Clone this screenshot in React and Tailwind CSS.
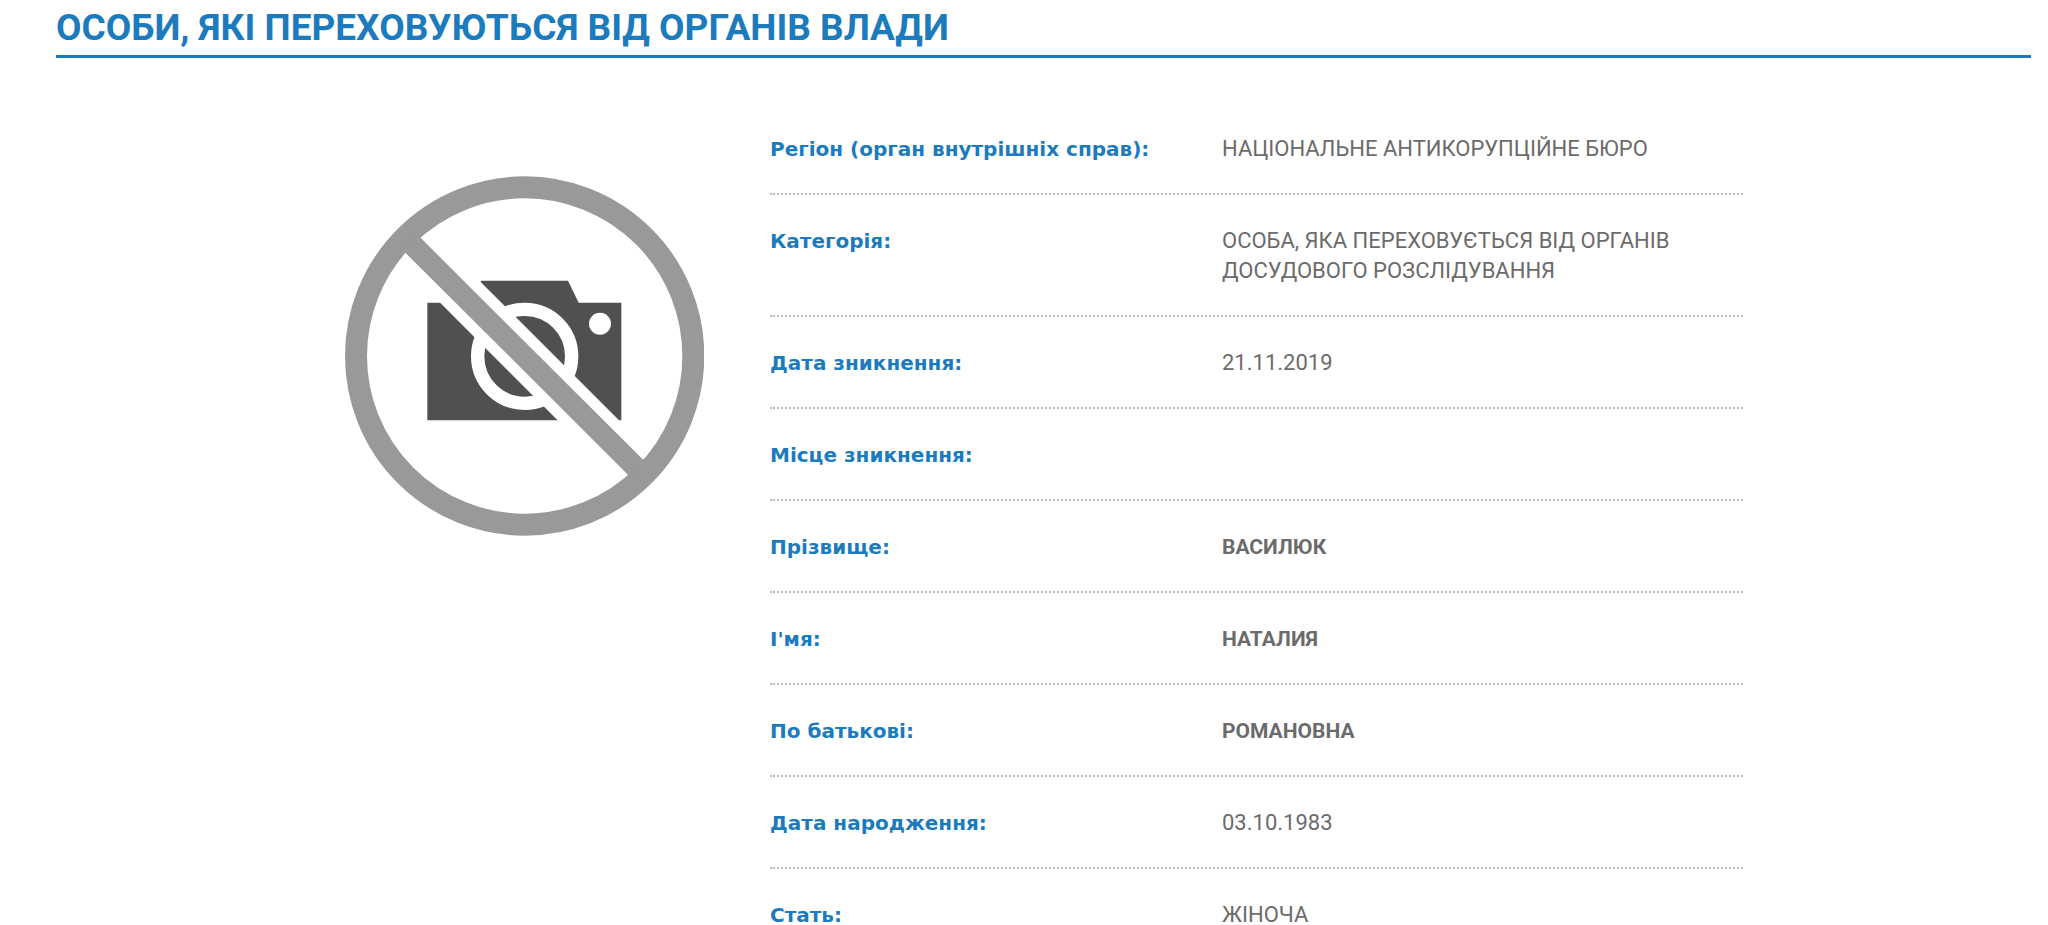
const details = [
  { label: "Регіон (орган внутрішніх справ):", value: "НАЦІОНАЛЬНЕ АНТИКОРУПЦІЙНЕ БЮРО" },
  { label: "Категорія:", value: "ОСОБА, ЯКА ПЕРЕХОВУЄТЬСЯ ВІД ОРГАНІВ ДОСУДОВОГО РОЗСЛІДУВАННЯ" },
  { label: "Дата зникнення:", value: "21.11.2019" },
  { label: "Місце зникнення:", value: "" },
  { label: "Прізвище:", value: "ВАСИЛЮК", strong: true },
  { label: "І'мя:", value: "НАТАЛИЯ", strong: true },
  { label: "По батькові:", value: "РОМАНОВНА", strong: true },
  { label: "Дата народження:", value: "03.10.1983" },
  { label: "Стать:", value: "ЖІНОЧА" },
];

function NoPhoto() {
  return (
    <svg viewBox="72 48 1080 1080" className="w-full" role="img" aria-label="Фото відсутнє">
      <path d="M322 428H450L483 362H744L776 428H904V781H322Z" fill="#505050" />
      <circle cx="614" cy="589" r="141" fill="none" stroke="#fff" strokeWidth="40" />
      <circle cx="840" cy="491" r="33" fill="#fff" />
      <path d="M300 276L926 902" stroke="#fff" strokeWidth="130" />
      <circle cx="614" cy="588" r="506" fill="none" stroke="#999" strokeWidth="66" />
      <path d="M270 247L956 931" stroke="#999" strokeWidth="64" />
    </svg>
  );
}

function Row({ label, value, strong }) {
  return (
    <div className="grid grid-cols-[452px_minmax(0,1fr)] items-baseline border-b-2 border-dotted border-[#bbbbbb] pt-[31px] pb-[29px] leading-[30px]">
      <dt className="font-['DejaVu_Sans',sans-serif] text-[20px] font-bold text-[#1c7bbd]">{label}</dt>
      <dd className={strong ? "text-[21px] font-bold" : "text-[22px] font-normal"}>{value}</dd>
    </div>
  );
}

export default function App() {
  return (
    <main className="bg-white pr-[17px] pl-14 font-['Roboto','Noto_Sans',sans-serif] text-[#6b6b6b]">
      <h1 className="border-b-3 border-[#1c7bbd] pt-1 pb-1 text-[37px] leading-[47px] font-bold text-[#1c7bbd]">
        ОСОБИ, ЯКІ ПЕРЕХОВУЮТЬСЯ ВІД ОРГАНІВ ВЛАДИ
      </h1>
      <div className="mx-auto mt-[45px] grid max-w-[1399px] grid-cols-[360px_minmax(0,1fr)] gap-[66px]">
        <div className="pt-[73px]">
          <NoPhoto />
        </div>
        <dl>
          {details.map((item) => (
            <Row key={item.label} {...item} />
          ))}
        </dl>
      </div>
    </main>
  );
}
